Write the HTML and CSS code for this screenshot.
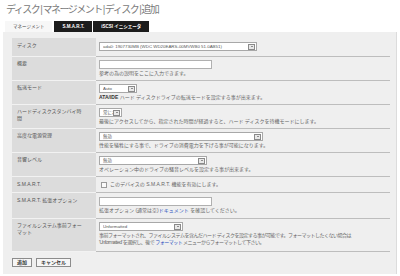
FILE: index.html
```html
<!DOCTYPE html>
<html lang="ja">
<head>
<meta charset="utf-8">
<title>ディスク|追加</title>
<link rel="stylesheet" href="styles.css">
</head>
<body>
<div class="title">ディスク<span class="pipe">|</span>マネージメント<span class="pipe">|</span>ディスク<span class="pipe">|</span>追加</div>
<div class="tabs">
  <div class="tab active">マネージメント</div>
  <div class="tab">S.M.A.R.T.</div>
  <div class="tab">iSCSI イニシエータ</div>
</div>
<div class="panel">
  <table class="form">
    <colgroup><col class="c-label"><col class="c-value"></colgroup>
    <tr class="first">
      <th>ディスク</th>
      <td><div class="sel w-disk"><span class="txt">ada0: 1907730MB (WDC WD20EARS-00MVWB0 51.0AB51)</span><span class="arr"></span></div></td>
    </tr>
    <tr>
      <th>概要</th>
      <td><div class="inp"></div><div class="help">参考の為の説明をここに入力できます。</div></td>
    </tr>
    <tr>
      <th>転送モード</th>
      <td><div class="sel w-auto"><span class="txt">Auto</span><span class="arr"></span></div><div class="help"><b>ATA/IDE</b> ハード ディスクドライブの転送モードを設定する事が出来ます。</div></td>
    </tr>
    <tr>
      <th>ハードディスクスタンバイ時間</th>
      <td><div class="sel w-stby"><span class="txt">常にオン</span><span class="arr"></span></div><div class="help">最後にアクセスしてから、指定された時間が経過すると、ハード ディスクを待機モードにします。</div></td>
    </tr>
    <tr>
      <th>高度な電源管理</th>
      <td><div class="sel w-apm"><span class="txt">無効</span><span class="arr"></span></div><div class="help">性能を犠牲にする事で、ドライブの消費電力を下げる事が可能になります。</div></td>
    </tr>
    <tr>
      <th>音響レベル</th>
      <td><div class="sel w-acou"><span class="txt">無効</span><span class="arr"></span></div><div class="help">オペレーション中のドライブの騒音レベルを設定する事が出来ます。</div></td>
    </tr>
    <tr class="smart">
      <th>S.M.A.R.T.</th>
      <td><div class="chk"><span class="box"></span><span>このデバイスの S.M.A.R.T. 機能を有効にします。</span></div></td>
    </tr>
    <tr class="ext">
      <th>S.M.A.R.T. 拡張オプション</th>
      <td><div class="inp"></div><div class="help">拡張オプション (通常は空)<a href="#">ドキュメント</a> を確認してください。</div></td>
    </tr>
    <tr class="last">
      <th>ファイルシステム事前フォーマット</th>
      <td><div class="sel w-fmt"><span class="txt">Unformatted</span><span class="arr"></span></div><div class="help tight">事前フォーマットされ、ファイルシステムを含んだハード ディスクを設定する事が可能です。フォーマットしたくない場合は<br>'Unformatted' を選択し、後で <a href="#">フォーマット</a> メニューからフォーマットして下さい。</div></td>
    </tr>
  </table>
  <div class="buttons">
    <button class="btn">追加</button>
    <button class="btn">キャンセル</button>
  </div>
</div>
</body>
</html>
```
FILE: styles.css
```css
html, body {
  margin: 0;
  padding: 0;
  background: #ffffff;
}
body {
  font-family: "Liberation Sans", "Noto Sans CJK JP", sans-serif;
  color: #555;
  width: 400px;
  height: 276px;
  overflow: hidden;
}
.title {
  height: 21px;
  box-sizing: border-box;
  padding: 3px 0 0 6px;
  font-size: 10px;
  line-height: 13px;
  letter-spacing: -1.5px;
  color: #7a7a7a;
  white-space: nowrap;
}
.title .pipe {
  padding: 0 1px;
  color: #888;
}
.tabs {
  display: flex;
  gap: 1px;
  margin-left: 5px;
  height: 11px;
}
.tab {
  background: #1c1c1c;
  color: #fff;
  font-size: 4.5px;
  font-weight: bold;
  line-height: 11px;
  padding: 0 8px;
  white-space: nowrap;
}
.tab.active {
  background: #f7f7f7;
  color: #444;
  font-weight: normal;
  margin-right: 1px;
}
.panel {
  margin-left: 3px;
  width: 394px;
  box-sizing: border-box;
  background: #efefef;
  border-right: 1px solid #dcdcdc;
  padding: 6px 7px 7px 9px;
}
.form {
  width: 378px;
  table-layout: fixed;
  border-collapse: collapse;
  border-spacing: 0;
}
.form col.c-label {
  width: 84px;
}
.form th {
  background: #dcdcdc;
  text-align: left;
  vertical-align: top;
  font-weight: normal;
  font-size: 5px;
  line-height: 7px;
  color: #555;
  padding: 3px 12px 3px 5px;
  border-bottom: 1px solid #f2f2f2;
}
.form td {
  vertical-align: top;
  padding: 3px 3px 3px 3px;
  border-bottom: 1px solid #bdbdbd;
  font-size: 5px;
  line-height: 7px;
}
.form tr.first th,
.form tr.first td {
  padding-top: 4px;
  padding-bottom: 5px;
}
.form tr.smart th,
.form tr.smart td {
  padding-top: 4px;
  padding-bottom: 4px;
}
.form tr.ext th,
.form tr.ext td {
  padding-top: 4px;
  padding-bottom: 4px;
}
.form tr.last th,
.form tr.last td {
  padding-top: 3px;
  padding-bottom: 5px;
}
.sel {
  display: flex;
  align-items: center;
  height: 9px;
  box-sizing: border-box;
  background: #fff;
  border: 1px solid #a8a8a8;
  padding-left: 3px;
  font-size: 4.4px;
  color: #555;
  overflow: hidden;
}
.sel .txt {
  flex: 1;
  white-space: nowrap;
  overflow: hidden;
}
.sel .arr {
  flex: none;
  position: relative;
  width: 7px;
  height: 6px;
  box-sizing: border-box;
  border: 1px solid #8a8a8a;
  background: #e8e8e8;
  margin-right: 1px;
}
.sel .arr::after {
  content: "";
  position: absolute;
  left: 1.5px;
  top: 1.5px;
  border-left: 1px solid transparent;
  border-right: 1px solid transparent;
  border-top: 1.5px solid #333;
}
.w-disk { width: 158px; }
.w-auto { width: 38px; }
.w-stby { width: 23px; }
.w-apm { width: 164px; }
.w-acou { width: 108px; }
.w-fmt { width: 84px; }
.inp {
  width: 113px;
  height: 9px;
  box-sizing: border-box;
  background: #fff;
  border: 1px solid #b0b0b0;
}
.help {
  margin-top: 1px;
  color: #666;
  white-space: nowrap;
}
.help.tight {
  letter-spacing: -0.5px;
}
.help b {
  color: #333;
}
.help a {
  color: #2a4fc0;
  text-decoration: none;
}
.chk {
  display: flex;
  align-items: center;
  gap: 3px;
  padding-left: 2px;
  color: #666;
  white-space: nowrap;
}
.chk .box {
  width: 6px;
  height: 6px;
  box-sizing: border-box;
  border: 1px solid #9a9a9a;
  background: #fafafa;
}
.buttons {
  display: flex;
  gap: 4px;
  margin-top: 6px;
}
.btn {
  margin: 0;
  height: 9px;
  padding: 0 4px;
  box-sizing: border-box;
  border: 1px solid #8c8c8c;
  background: #f6f6f6;
  font-family: "Liberation Sans", "Noto Sans CJK JP", sans-serif;
  font-size: 5px;
  font-weight: bold;
  line-height: 7px;
  color: #333;
}
```
